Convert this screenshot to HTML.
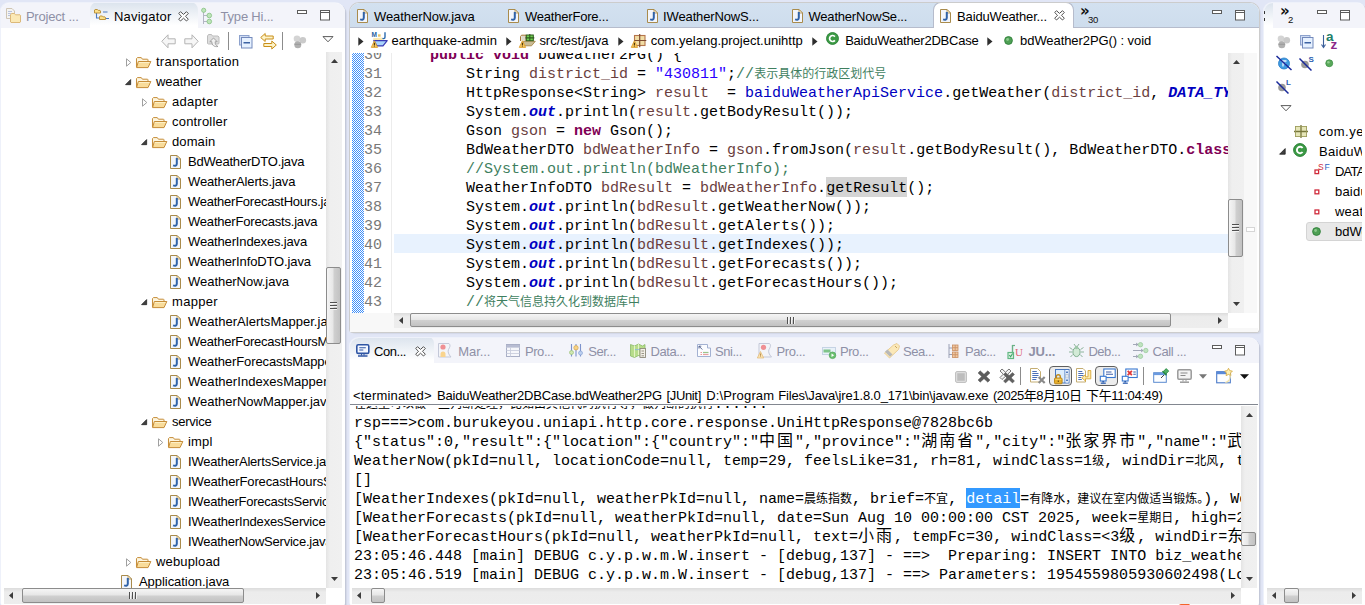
<!DOCTYPE html>
<html lang="zh-CN"><head><meta charset="utf-8"><title>Eclipse</title>
<style>
*{box-sizing:border-box;margin:0;padding:0}
html,body{width:1365px;height:605px;overflow:hidden}
body{background:#e1e6f6;font-family:"Liberation Sans","Noto Sans CJK SC",sans-serif;font-size:13px;color:#000;position:relative}
.abs{position:absolute}
.panel{position:absolute;background:#fff;border-radius:9px 9px 3px 3px;overflow:hidden;box-shadow:-1px -1px 0 #eef1fa,1px 1px 0 #c3c8d8,2px 2px 1px #d3d8e8}
.tabbar{position:absolute;left:0;top:0;right:0;height:25px;background:#f3f4fa}
.tabbar.act{background:linear-gradient(#d3e1f0,#cedded);height:25px;border-bottom:1px solid #b6bccc}
.panel.actp{box-shadow:0 0 0 1px #cccccc,2px 2px 1px #d3d8e8}
.tab.sel.ed{background:#fff;border:1px solid #b6bccc;border-bottom:0;height:27px;top:-1px}
.tab{position:absolute;top:0;height:25px;white-space:pre;line-height:27px;color:#8d8fa9}
.tab.sel{color:#000;background:linear-gradient(#dbe3ed,#fff 90%);border-radius:8px 8px 0 0;top:-1px;height:26px}
.t13{font-size:13px}
svg{display:block;overflow:visible}
.row{position:absolute;left:0;height:20px;width:400px;white-space:pre}
.row .tx{top:0;line-height:19px;font-size:13px}
.cl{position:absolute;left:0;height:19px;width:1000px;white-space:pre;font-family:"Liberation Mono","Noto Sans CJK SC",monospace;font-size:15px;line-height:19px}
.cl.cur .ct::before{content:"";position:absolute;left:0;top:-2px;width:100%;height:19px;background:#e8f2fe;z-index:-1}
.cl.cur .ct{z-index:0}
.ln{position:absolute;left:14px;width:18px;color:#787878;text-align:right}
.ct{position:absolute;left:44px;width:834px;height:19px}
.kw{color:#7f0055}
.lv{color:#6a3e3e}
.st{color:#2a00ff}
.cm{color:#3f7f5f}
.fd{color:#0000c0}
.sf{color:#0000c0;font-style:italic}
.occ{background:#d4d4d4;padding-top:3px}
.zh{font-size:12px;font-family:"Liberation Sans","Noto Sans CJK SC",sans-serif;letter-spacing:0;line-height:0}
.col{position:absolute;left:4px;height:19px;white-space:pre;font-family:"Liberation Mono","Noto Sans CJK SC",monospace;font-size:15px;line-height:19px;color:#000}
.zs{font-size:12px;font-family:"Liberation Sans","Noto Sans CJK SC",sans-serif;line-height:0}
.zb{font-size:16px;letter-spacing:2px;font-family:"Liberation Sans","Noto Sans CJK SC",sans-serif;line-height:0}
.sel{background:#3399ff;color:#fff;padding-top:3px}
.chk{background-color:#fff;background-image:linear-gradient(45deg,#3f8ffa 25%,transparent 25%,transparent 75%,#3f8ffa 75%),linear-gradient(45deg,#3f8ffa 25%,transparent 25%,transparent 75%,#3f8ffa 75%);background-size:2px 2px;background-position:0 0,1px 1px}
.i{position:absolute}
.lb{position:absolute;white-space:pre;font-size:13px;line-height:16px;color:#000}
.lb.g{color:#8e90a6}
.sb{position:absolute;background:#f0f0f0}
.sbv{background:linear-gradient(90deg,#e4e4e4,#efefef 25%,#f0f0f0)}
.sbh{background:linear-gradient(#dcdcdc,#ececec 25%,#ededed)}
.th{position:absolute;border:1px solid #8c8c8c;border-radius:2px}
.thv{background:linear-gradient(90deg,#f5f5f5,#e6e6e6 48%,#d0d0d0 52%,#c2c2c2)}
.thh{background:linear-gradient(#f5f5f5,#e6e6e6 48%,#d0d0d0 52%,#c2c2c2)}
.gpv{position:absolute;width:7px;height:8px;background:repeating-linear-gradient(#505050 0,#505050 1px,#f4f4f4 1px,#f4f4f4 2px,transparent 2px,transparent 3px)}
.gph{position:absolute;width:8px;height:7px;background:repeating-linear-gradient(90deg,#505050 0,#505050 1px,#f4f4f4 1px,#f4f4f4 2px,transparent 2px,transparent 3px)}
.bc{position:absolute;top:0;line-height:24px;white-space:pre;font-size:13px}
</style></head><body>

<!-- ============ LEFT PANEL : Navigator ============ -->
<div class="panel" style="left:1px;top:3px;width:344px;height:603px">
  <div class="tabbar"></div>
  <div class="tab sel" style="left:89px;width:108px"></div>
  <div class="abs" id="navtree" style="left:1px;top:49px;width:324px;height:536px;overflow:hidden">
<div class="row" style="top:0px"><span style="left:124px;top:6px" class="abs"><svg class="tw" width="6" height="9" viewBox="0 0 6 9"><path d="M0.5 0.8L4.8 4.5L0.5 8.2z" fill="#fff" stroke="#a0a0a0" stroke-width="1"/></svg></span><span class="abs" style="left:134px;top:5px"><svg class="ic" width="15.4" height="12" viewBox="0 0 16 12" preserveAspectRatio="none"><path d="M0.5 10V1.6l1-1h4l1.2 1.6h5.3l.5.6v2.2" fill="#fdf6e0" stroke="#c48a35"/><path d="M0.6 10.6L2.4 4.5h13l-2.9 6.1z" fill="#f9dc9a" stroke="#c48a35" stroke-linejoin="round"/><path d="M3 5.5h11" stroke="#fdf0c8" stroke-width="1"/></svg></span><span class="abs tx" style="left:154px;letter-spacing:0.26px">transportation</span></div>
<div class="row" style="top:20px"><span style="left:123px;top:7px" class="abs"><svg class="tw" width="6.4" height="6.4" viewBox="0 0 7 7"><path d="M6.2 0.6v5.6h-5.6z" fill="#404040" stroke="#202020" stroke-width=".8" stroke-linejoin="round"/></svg></span><span class="abs" style="left:134px;top:5px"><svg class="ic" width="15.4" height="12" viewBox="0 0 16 12" preserveAspectRatio="none"><path d="M0.5 10V1.6l1-1h4l1.2 1.6h5.3l.5.6v2.2" fill="#fdf6e0" stroke="#c48a35"/><path d="M0.6 10.6L2.4 4.5h13l-2.9 6.1z" fill="#f9dc9a" stroke="#c48a35" stroke-linejoin="round"/><path d="M3 5.5h11" stroke="#fdf0c8" stroke-width="1"/></svg></span><span class="abs tx" style="left:154px;letter-spacing:-0.04px">weather</span></div>
<div class="row" style="top:40px"><span style="left:140px;top:6px" class="abs"><svg class="tw" width="6" height="9" viewBox="0 0 6 9"><path d="M0.5 0.8L4.8 4.5L0.5 8.2z" fill="#fff" stroke="#a0a0a0" stroke-width="1"/></svg></span><span class="abs" style="left:150px;top:5px"><svg class="ic" width="15.4" height="12" viewBox="0 0 16 12" preserveAspectRatio="none"><path d="M0.5 10V1.6l1-1h4l1.2 1.6h5.3l.5.6v2.2" fill="#fdf6e0" stroke="#c48a35"/><path d="M0.6 10.6L2.4 4.5h13l-2.9 6.1z" fill="#f9dc9a" stroke="#c48a35" stroke-linejoin="round"/><path d="M3 5.5h11" stroke="#fdf0c8" stroke-width="1"/></svg></span><span class="abs tx" style="left:170px;letter-spacing:0.27px">adapter</span></div>
<div class="row" style="top:60px"><span class="abs" style="left:150px;top:5px"><svg class="ic" width="15.4" height="12" viewBox="0 0 16 12" preserveAspectRatio="none"><path d="M0.5 10V1.6l1-1h4l1.2 1.6h5.3l.5.6v2.2" fill="#fdf6e0" stroke="#c48a35"/><path d="M0.6 10.6L2.4 4.5h13l-2.9 6.1z" fill="#f9dc9a" stroke="#c48a35" stroke-linejoin="round"/><path d="M3 5.5h11" stroke="#fdf0c8" stroke-width="1"/></svg></span><span class="abs tx" style="left:170px;letter-spacing:0.2px">controller</span></div>
<div class="row" style="top:80px"><span style="left:139px;top:7px" class="abs"><svg class="tw" width="6.4" height="6.4" viewBox="0 0 7 7"><path d="M6.2 0.6v5.6h-5.6z" fill="#404040" stroke="#202020" stroke-width=".8" stroke-linejoin="round"/></svg></span><span class="abs" style="left:150px;top:5px"><svg class="ic" width="15.4" height="12" viewBox="0 0 16 12" preserveAspectRatio="none"><path d="M0.5 10V1.6l1-1h4l1.2 1.6h5.3l.5.6v2.2" fill="#fdf6e0" stroke="#c48a35"/><path d="M0.6 10.6L2.4 4.5h13l-2.9 6.1z" fill="#f9dc9a" stroke="#c48a35" stroke-linejoin="round"/><path d="M3 5.5h11" stroke="#fdf0c8" stroke-width="1"/></svg></span><span class="abs tx" style="left:170px;letter-spacing:0.11px">domain</span></div>
<div class="row" style="top:100px"><span class="abs" style="left:168px;top:3px"><svg class="ic" width="11" height="14" viewBox="0 0 11 14"><path d="M0.500 0.500h6.500l3.500 3.500v9.500h-10z" fill="#f3f6fc" stroke="#a98b4c"/><path d="M7 0.500v3.500h3.500z" fill="#fdf6e0" stroke="#a98b4c" stroke-width=".8"/><path d="M6.800 3v5.800c0 1.900-1.500 2.500-3.700 1.600" fill="none" stroke="#2f62a8" stroke-width="2"/></svg></span><span class="abs tx" style="left:186px;letter-spacing:-0.19px">BdWeatherDTO.java</span></div>
<div class="row" style="top:120px"><span class="abs" style="left:168px;top:3px"><svg class="ic" width="11" height="14" viewBox="0 0 11 14"><path d="M0.500 0.500h6.500l3.500 3.500v9.500h-10z" fill="#f3f6fc" stroke="#a98b4c"/><path d="M7 0.500v3.500h3.500z" fill="#fdf6e0" stroke="#a98b4c" stroke-width=".8"/><path d="M6.800 3v5.800c0 1.900-1.500 2.500-3.700 1.600" fill="none" stroke="#2f62a8" stroke-width="2"/></svg></span><span class="abs tx" style="left:186px;letter-spacing:-0.13px">WeatherAlerts.java</span></div>
<div class="row" style="top:140px"><span class="abs" style="left:168px;top:3px"><svg class="ic" width="11" height="14" viewBox="0 0 11 14"><path d="M0.500 0.500h6.500l3.500 3.500v9.500h-10z" fill="#f3f6fc" stroke="#a98b4c"/><path d="M7 0.500v3.500h3.500z" fill="#fdf6e0" stroke="#a98b4c" stroke-width=".8"/><path d="M6.800 3v5.800c0 1.900-1.500 2.500-3.700 1.600" fill="none" stroke="#2f62a8" stroke-width="2"/></svg></span><span class="abs tx" style="left:186px;letter-spacing:-0.25px">WeatherForecastHours.java</span></div>
<div class="row" style="top:160px"><span class="abs" style="left:168px;top:3px"><svg class="ic" width="11" height="14" viewBox="0 0 11 14"><path d="M0.500 0.500h6.500l3.500 3.500v9.500h-10z" fill="#f3f6fc" stroke="#a98b4c"/><path d="M7 0.500v3.500h3.500z" fill="#fdf6e0" stroke="#a98b4c" stroke-width=".8"/><path d="M6.800 3v5.800c0 1.900-1.500 2.500-3.700 1.600" fill="none" stroke="#2f62a8" stroke-width="2"/></svg></span><span class="abs tx" style="left:186px;letter-spacing:-0.2px">WeatherForecasts.java</span></div>
<div class="row" style="top:180px"><span class="abs" style="left:168px;top:3px"><svg class="ic" width="11" height="14" viewBox="0 0 11 14"><path d="M0.500 0.500h6.500l3.500 3.500v9.500h-10z" fill="#f3f6fc" stroke="#a98b4c"/><path d="M7 0.500v3.500h3.500z" fill="#fdf6e0" stroke="#a98b4c" stroke-width=".8"/><path d="M6.800 3v5.800c0 1.900-1.500 2.500-3.700 1.600" fill="none" stroke="#2f62a8" stroke-width="2"/></svg></span><span class="abs tx" style="left:186px;letter-spacing:-0.15px">WeatherIndexes.java</span></div>
<div class="row" style="top:200px"><span class="abs" style="left:168px;top:3px"><svg class="ic" width="11" height="14" viewBox="0 0 11 14"><path d="M0.500 0.500h6.500l3.500 3.500v9.500h-10z" fill="#f3f6fc" stroke="#a98b4c"/><path d="M7 0.500v3.500h3.500z" fill="#fdf6e0" stroke="#a98b4c" stroke-width=".8"/><path d="M6.800 3v5.800c0 1.900-1.500 2.500-3.700 1.600" fill="none" stroke="#2f62a8" stroke-width="2"/></svg></span><span class="abs tx" style="left:186px;letter-spacing:-0.12px">WeatherInfoDTO.java</span></div>
<div class="row" style="top:220px"><span class="abs" style="left:168px;top:3px"><svg class="ic" width="11" height="14" viewBox="0 0 11 14"><path d="M0.500 0.500h6.500l3.500 3.500v9.500h-10z" fill="#f3f6fc" stroke="#a98b4c"/><path d="M7 0.500v3.500h3.500z" fill="#fdf6e0" stroke="#a98b4c" stroke-width=".8"/><path d="M6.800 3v5.800c0 1.900-1.500 2.500-3.700 1.600" fill="none" stroke="#2f62a8" stroke-width="2"/></svg></span><span class="abs tx" style="left:186px;letter-spacing:-0.04px">WeatherNow.java</span></div>
<div class="row" style="top:240px"><span style="left:139px;top:7px" class="abs"><svg class="tw" width="6.4" height="6.4" viewBox="0 0 7 7"><path d="M6.2 0.6v5.6h-5.6z" fill="#404040" stroke="#202020" stroke-width=".8" stroke-linejoin="round"/></svg></span><span class="abs" style="left:150px;top:5px"><svg class="ic" width="15.4" height="12" viewBox="0 0 16 12" preserveAspectRatio="none"><path d="M0.5 10V1.6l1-1h4l1.2 1.6h5.3l.5.6v2.2" fill="#fdf6e0" stroke="#c48a35"/><path d="M0.6 10.6L2.4 4.5h13l-2.9 6.1z" fill="#f9dc9a" stroke="#c48a35" stroke-linejoin="round"/><path d="M3 5.5h11" stroke="#fdf0c8" stroke-width="1"/></svg></span><span class="abs tx" style="left:170px;letter-spacing:0.32px">mapper</span></div>
<div class="row" style="top:260px"><span class="abs" style="left:168px;top:3px"><svg class="ic" width="11" height="14" viewBox="0 0 11 14"><path d="M0.500 0.500h6.500l3.500 3.500v9.500h-10z" fill="#f3f6fc" stroke="#a98b4c"/><path d="M7 0.500v3.500h3.500z" fill="#fdf6e0" stroke="#a98b4c" stroke-width=".8"/><path d="M6.800 3v5.800c0 1.900-1.500 2.500-3.700 1.600" fill="none" stroke="#2f62a8" stroke-width="2"/></svg></span><span class="abs tx" style="left:186px;letter-spacing:0.02px">WeatherAlertsMapper.java</span></div>
<div class="row" style="top:280px"><span class="abs" style="left:168px;top:3px"><svg class="ic" width="11" height="14" viewBox="0 0 11 14"><path d="M0.500 0.500h6.500l3.500 3.500v9.500h-10z" fill="#f3f6fc" stroke="#a98b4c"/><path d="M7 0.500v3.500h3.500z" fill="#fdf6e0" stroke="#a98b4c" stroke-width=".8"/><path d="M6.800 3v5.800c0 1.900-1.500 2.500-3.700 1.600" fill="none" stroke="#2f62a8" stroke-width="2"/></svg></span><span class="abs tx" style="left:186px;letter-spacing:-0.23px">WeatherForecastHoursMapper.java</span></div>
<div class="row" style="top:300px"><span class="abs" style="left:168px;top:3px"><svg class="ic" width="11" height="14" viewBox="0 0 11 14"><path d="M0.500 0.500h6.500l3.500 3.500v9.500h-10z" fill="#f3f6fc" stroke="#a98b4c"/><path d="M7 0.500v3.500h3.500z" fill="#fdf6e0" stroke="#a98b4c" stroke-width=".8"/><path d="M6.800 3v5.800c0 1.900-1.500 2.500-3.700 1.600" fill="none" stroke="#2f62a8" stroke-width="2"/></svg></span><span class="abs tx" style="left:186px;letter-spacing:-0.1px">WeatherForecastsMapper.java</span></div>
<div class="row" style="top:320px"><span class="abs" style="left:168px;top:3px"><svg class="ic" width="11" height="14" viewBox="0 0 11 14"><path d="M0.500 0.500h6.500l3.500 3.500v9.500h-10z" fill="#f3f6fc" stroke="#a98b4c"/><path d="M7 0.500v3.500h3.500z" fill="#fdf6e0" stroke="#a98b4c" stroke-width=".8"/><path d="M6.800 3v5.800c0 1.900-1.500 2.500-3.700 1.600" fill="none" stroke="#2f62a8" stroke-width="2"/></svg></span><span class="abs tx" style="left:186px;letter-spacing:0.05px">WeatherIndexesMapper.java</span></div>
<div class="row" style="top:340px"><span class="abs" style="left:168px;top:3px"><svg class="ic" width="11" height="14" viewBox="0 0 11 14"><path d="M0.500 0.500h6.500l3.500 3.500v9.500h-10z" fill="#f3f6fc" stroke="#a98b4c"/><path d="M7 0.500v3.500h3.500z" fill="#fdf6e0" stroke="#a98b4c" stroke-width=".8"/><path d="M6.800 3v5.800c0 1.900-1.500 2.500-3.700 1.600" fill="none" stroke="#2f62a8" stroke-width="2"/></svg></span><span class="abs tx" style="left:186px;letter-spacing:0.0px">WeatherNowMapper.java</span></div>
<div class="row" style="top:360px"><span style="left:139px;top:7px" class="abs"><svg class="tw" width="6.4" height="6.4" viewBox="0 0 7 7"><path d="M6.2 0.6v5.6h-5.6z" fill="#404040" stroke="#202020" stroke-width=".8" stroke-linejoin="round"/></svg></span><span class="abs" style="left:150px;top:5px"><svg class="ic" width="15.4" height="12" viewBox="0 0 16 12" preserveAspectRatio="none"><path d="M0.5 10V1.6l1-1h4l1.2 1.6h5.3l.5.6v2.2" fill="#fdf6e0" stroke="#c48a35"/><path d="M0.6 10.6L2.4 4.5h13l-2.9 6.1z" fill="#f9dc9a" stroke="#c48a35" stroke-linejoin="round"/><path d="M3 5.5h11" stroke="#fdf0c8" stroke-width="1"/></svg></span><span class="abs tx" style="left:170px;letter-spacing:-0.24px">service</span></div>
<div class="row" style="top:380px"><span style="left:156px;top:6px" class="abs"><svg class="tw" width="6" height="9" viewBox="0 0 6 9"><path d="M0.5 0.8L4.8 4.5L0.5 8.2z" fill="#fff" stroke="#a0a0a0" stroke-width="1"/></svg></span><span class="abs" style="left:166px;top:5px"><svg class="ic" width="15.4" height="12" viewBox="0 0 16 12" preserveAspectRatio="none"><path d="M0.5 10V1.6l1-1h4l1.2 1.6h5.3l.5.6v2.2" fill="#fdf6e0" stroke="#c48a35"/><path d="M0.6 10.6L2.4 4.5h13l-2.9 6.1z" fill="#f9dc9a" stroke="#c48a35" stroke-linejoin="round"/><path d="M3 5.5h11" stroke="#fdf0c8" stroke-width="1"/></svg></span><span class="abs tx" style="left:186px;letter-spacing:0.19px">impl</span></div>
<div class="row" style="top:400px"><span class="abs" style="left:168px;top:3px"><svg class="ic" width="11" height="14" viewBox="0 0 11 14"><path d="M0.500 0.500h6.500l3.500 3.500v9.500h-10z" fill="#f3f6fc" stroke="#a98b4c"/><path d="M7 0.500v3.500h3.500z" fill="#fdf6e0" stroke="#a98b4c" stroke-width=".8"/><path d="M6.800 3v5.800c0 1.900-1.500 2.500-3.700 1.600" fill="none" stroke="#2f62a8" stroke-width="2"/></svg></span><span class="abs tx" style="left:186px;letter-spacing:-0.2px">IWeatherAlertsService.java</span></div>
<div class="row" style="top:420px"><span class="abs" style="left:168px;top:3px"><svg class="ic" width="11" height="14" viewBox="0 0 11 14"><path d="M0.500 0.500h6.500l3.500 3.500v9.500h-10z" fill="#f3f6fc" stroke="#a98b4c"/><path d="M7 0.500v3.500h3.500z" fill="#fdf6e0" stroke="#a98b4c" stroke-width=".8"/><path d="M6.800 3v5.800c0 1.900-1.500 2.500-3.700 1.600" fill="none" stroke="#2f62a8" stroke-width="2"/></svg></span><span class="abs tx" style="left:186px;letter-spacing:-0.13px">IWeatherForecastHoursService.java</span></div>
<div class="row" style="top:440px"><span class="abs" style="left:168px;top:3px"><svg class="ic" width="11" height="14" viewBox="0 0 11 14"><path d="M0.500 0.500h6.500l3.500 3.500v9.500h-10z" fill="#f3f6fc" stroke="#a98b4c"/><path d="M7 0.500v3.500h3.500z" fill="#fdf6e0" stroke="#a98b4c" stroke-width=".8"/><path d="M6.800 3v5.800c0 1.900-1.500 2.500-3.700 1.600" fill="none" stroke="#2f62a8" stroke-width="2"/></svg></span><span class="abs tx" style="left:186px;letter-spacing:-0.24px">IWeatherForecastsService.java</span></div>
<div class="row" style="top:460px"><span class="abs" style="left:168px;top:3px"><svg class="ic" width="11" height="14" viewBox="0 0 11 14"><path d="M0.500 0.500h6.500l3.500 3.500v9.500h-10z" fill="#f3f6fc" stroke="#a98b4c"/><path d="M7 0.500v3.500h3.500z" fill="#fdf6e0" stroke="#a98b4c" stroke-width=".8"/><path d="M6.800 3v5.800c0 1.900-1.500 2.500-3.700 1.600" fill="none" stroke="#2f62a8" stroke-width="2"/></svg></span><span class="abs tx" style="left:186px;letter-spacing:-0.18px">IWeatherIndexesService.java</span></div>
<div class="row" style="top:480px"><span class="abs" style="left:168px;top:3px"><svg class="ic" width="11" height="14" viewBox="0 0 11 14"><path d="M0.500 0.500h6.500l3.500 3.500v9.500h-10z" fill="#f3f6fc" stroke="#a98b4c"/><path d="M7 0.500v3.500h3.500z" fill="#fdf6e0" stroke="#a98b4c" stroke-width=".8"/><path d="M6.800 3v5.800c0 1.900-1.500 2.500-3.700 1.600" fill="none" stroke="#2f62a8" stroke-width="2"/></svg></span><span class="abs tx" style="left:186px;letter-spacing:-0.22px">IWeatherNowService.java</span></div>
<div class="row" style="top:500px"><span style="left:124px;top:6px" class="abs"><svg class="tw" width="6" height="9" viewBox="0 0 6 9"><path d="M0.5 0.8L4.8 4.5L0.5 8.2z" fill="#fff" stroke="#a0a0a0" stroke-width="1"/></svg></span><span class="abs" style="left:134px;top:5px"><svg class="ic" width="15.4" height="12" viewBox="0 0 16 12" preserveAspectRatio="none"><path d="M0.5 10V1.6l1-1h4l1.2 1.6h5.3l.5.6v2.2" fill="#fdf6e0" stroke="#c48a35"/><path d="M0.6 10.6L2.4 4.5h13l-2.9 6.1z" fill="#f9dc9a" stroke="#c48a35" stroke-linejoin="round"/><path d="M3 5.5h11" stroke="#fdf0c8" stroke-width="1"/></svg></span><span class="abs tx" style="left:154px;letter-spacing:0.15px">webupload</span></div>
<div class="row" style="top:520px"><span class="abs" style="left:119px;top:3px"><svg class="ic" width="11" height="14" viewBox="0 0 11 14"><path d="M0.500 0.500h6.500l3.500 3.500v9.500h-10z" fill="#f3f6fc" stroke="#a98b4c"/><path d="M7 0.500v3.500h3.500z" fill="#fdf6e0" stroke="#a98b4c" stroke-width=".8"/><path d="M6.800 3v5.800c0 1.900-1.500 2.500-3.700 1.600" fill="none" stroke="#2f62a8" stroke-width="2"/></svg></span><span class="abs tx" style="left:137px;letter-spacing:-0.05px">Application.java</span></div>
  </div>
</div>

<!-- ============ EDITOR PANEL ============ -->
<div class="panel actp" style="left:350px;top:3px;width:909px;height:329px">
  <div class="tabbar act"></div>
  <div class="tab sel ed" style="left:583px;width:141px"></div>
  <div class="abs" style="left:0;top:25px;width:908px;height:25px;background:#fff">
  </div>
  <div class="abs" id="code" style="left:0;top:50px;width:878px;height:260px;overflow:hidden">
    <div class="abs chk" style="left:2px;top:0;width:12px;height:261px"></div>
    <div class="abs" style="left:41px;top:0;width:1px;height:261px;background:#ececec"></div>
<div class="cl" style="top:-7px"><span class="ln">30</span><span class="ct">    <b class="kw">public</b> <b class="kw">void</b> bdWeather2PG() {</span></div>
<div class="cl" style="top:12px"><span class="ln">31</span><span class="ct">        String <span class="lv">district_id</span> = <span class="st">"430811"</span>;<span class="cm">//<span class="zh">表示具体的行政区划代号</span></span></span></div>
<div class="cl" style="top:31px"><span class="ln">32</span><span class="ct">        HttpResponse&lt;String&gt; <span class="lv">result</span>  = <span class="fd">baiduWeatherApiService</span>.getWeather(<span class="lv">district_id</span>, <b class="sf">DATA_TYPE</b>);</span></div>
<div class="cl" style="top:50px"><span class="ln">33</span><span class="ct">        System.<b class="sf">out</b>.println(<span class="lv">result</span>.getBodyResult());</span></div>
<div class="cl" style="top:69px"><span class="ln">34</span><span class="ct">        Gson <span class="lv">gson</span> = <b class="kw">new</b> Gson();</span></div>
<div class="cl" style="top:88px"><span class="ln">35</span><span class="ct">        BdWeatherDTO <span class="lv">bdWeatherInfo</span> = <span class="lv">gson</span>.fromJson(<span class="lv">result</span>.getBodyResult(), BdWeatherDTO.<b class="kw">class</b>);</span></div>
<div class="cl" style="top:107px"><span class="ln">36</span><span class="ct">        <span class="cm">//System.out.println(bdWeatherInfo);</span></span></div>
<div class="cl" style="top:126px"><span class="ln">37</span><span class="ct">        WeatherInfoDTO <span class="lv">bdResult</span> = <span class="lv">bdWeatherInfo</span>.<span class="occ">getResult</span>();</span></div>
<div class="cl" style="top:145px"><span class="ln">38</span><span class="ct">        System.<b class="sf">out</b>.println(<span class="lv">bdResult</span>.getWeatherNow());</span></div>
<div class="cl" style="top:164px"><span class="ln">39</span><span class="ct">        System.<b class="sf">out</b>.println(<span class="lv">bdResult</span>.getAlerts());</span></div>
<div class="cl cur" style="top:183px"><span class="ln">40</span><span class="ct">        System.<b class="sf">out</b>.println(<span class="lv">bdResult</span>.getIndexes());</span></div>
<div class="cl" style="top:202px"><span class="ln">41</span><span class="ct">        System.<b class="sf">out</b>.println(<span class="lv">bdResult</span>.getForecasts());</span></div>
<div class="cl" style="top:221px"><span class="ln">42</span><span class="ct">        System.<b class="sf">out</b>.println(<span class="lv">bdResult</span>.getForecastHours());</span></div>
<div class="cl" style="top:240px"><span class="ln">43</span><span class="ct">        <span class="cm">//<span class="zh">将天气信息持久化到数据库中</span></span></span></div>

  </div>
</div>

<!-- ============ CONSOLE PANEL ============ -->
<div class="panel" style="left:350px;top:338px;width:909px;height:268px">
  <div class="tabbar"></div>
  <div class="tab sel" style="left:0;width:84px;border-radius:6px 6px 0 0"></div>
  <div class="abs" style="left:0;top:66px;width:908px;height:1px;background:#828790"></div>
  <div class="abs" id="con" style="left:0;top:68px;width:891px;height:182px;overflow:hidden">
<div class="col" style="top:-11px"><span class="zs">在这里可以做一些判断处理，比如由其他代码执行等，做判断的执行</span>......</div>
<div class="col" style="top:8px">rsp===&gt;com.burukeyou.uniapi.http.core.response.UniHttpResponse@7828bc6b</div>
<div class="col" style="top:27px">{"status":0,"result":{"location":{"country":"<span class="zb">中国</span>","province":"<span class="zb">湖南省</span>","city":"<span class="zb">张家界市</span>","name":"<span class="zb">武陵源</span>"</div>
<div class="col" style="top:46px">WeatherNow(pkId=null, locationCode=null, temp=29, feelsLike=31, rh=81, windClass=1<span class="zs">级</span>, windDir=<span class="zs">北风</span>, text=</div>
<div class="col" style="top:65px">[]</div>
<div class="col" style="top:84px">[WeatherIndexes(pkId=null, weatherPkId=null, name=<span class="zs">晨练指数</span>, brief=<span class="zs">不宜</span>, <span class="sel">detail</span>=<span class="zs">有降水，建议在室内做适当锻炼。</span>), WeatherIndexes(</div>
<div class="col" style="top:103px">[WeatherForecasts(pkId=null, weatherPkId=null, date=Sun Aug 10 00:00:00 CST 2025, week=<span class="zs">星期日</span>, high=29, low=</div>
<div class="col" style="top:122px">[WeatherForecastHours(pkId=null, weatherPkId=null, text=<span class="zb">小雨</span>, tempFc=30, windClass=&lt;3<span class="zb">级</span>, windDir=<span class="zb">东风</span>, rh=</div>
<div class="col" style="top:141px">23:05:46.448 [main] DEBUG c.y.p.w.m.W.insert - [debug,137] - ==&gt;  Preparing: INSERT INTO biz_weather_now</div>
<div class="col" style="top:160px">23:05:46.519 [main] DEBUG c.y.p.w.m.W.insert - [debug,137] - ==&gt; Parameters: 1954559805930602498(Long)</div>

  </div>
</div>

<!-- ============ OUTLINE PANEL ============ -->
<div class="panel" style="left:1264px;top:3px;width:101px;height:603px;border-radius:9px 7px 3px 3px">
  <div class="tabbar" style="left:9px"></div>
  <div class="abs" style="left:0;top:0;width:9px;height:25px;background:linear-gradient(#dbe3ed,#fff 90%)"></div>
  <div class="abs" style="left:0;top:8px;width:1px;height:3px;background:#333"></div><div class="abs" style="left:0;top:15px;width:1px;height:3px;background:#333"></div>
  <div class="abs t13" style="left:55px;top:119px;line-height:19px;white-space:pre;letter-spacing:.5px">com.yelang.project.unihttp</div>
  <div class="abs t13" style="left:55px;top:139px;line-height:19px;white-space:pre;letter-spacing:.3px">BaiduWeather2DBCase</div>
  <div class="abs t13" style="left:71px;top:159px;line-height:19px;white-space:pre;letter-spacing:-.8px">DATA_TYPE</div>
  <div class="abs t13" style="left:71px;top:179px;line-height:19px;white-space:pre;letter-spacing:.2px">baiduWeatherApiService</div>
  <div class="abs t13" style="left:71px;top:199px;line-height:19px;white-space:pre;letter-spacing:.2px">weatherService</div>
  <div class="abs" style="left:42px;top:219px;width:90px;height:19px;background:#e8e8e8;border:1px solid #d4d4d4;border-radius:3px"></div>
  <div class="abs t13" style="left:71px;top:219px;line-height:19px;white-space:pre">bdWeather2PG() : void</div>
</div>

<!-- ============ ICON OVERLAY (page coordinates) ============ -->
<div class="i" style="left:1178px;top:603px;width:12px;height:6px;border-radius:50% 60% 0 0;background:#f4642a;transform:rotate(-12deg)"></div>
<div class="i" style="left:1362px;top:28px;width:3px;height:578px;background:#fff"></div>
<div id="scroll">
<div class="sb sbv" style="left:326px;top:52px;width:16px;height:536px"></div><svg class="i" style="left:331.0px;top:59.0px" width="7" height="4" viewBox="0 0 7 4"><polygon points="0,4 3.5,0 7,4" fill="#3c3c3c"/></svg><svg class="i" style="left:331.0px;top:577.0px" width="7" height="4" viewBox="0 0 7 4"><polygon points="0,0 7,0 3.5,4" fill="#3c3c3c"/></svg><div class="th thv" style="left:326px;top:267px;width:15px;height:77px"></div><div class="gpv" style="left:330px;top:302px"></div>
<div class="sb sbh" style="left:4px;top:588px;width:322px;height:16px"></div><svg class="i" style="left:9.0px;top:592.0px" width="4" height="7" viewBox="0 0 4 7"><polygon points="4,0 4,7 0,3.5" fill="#3c3c3c"/></svg><svg class="i" style="left:316.0px;top:592.0px" width="4" height="7" viewBox="0 0 4 7"><polygon points="0,0 0,7 4,3.5" fill="#3c3c3c"/></svg><div class="th thh" style="left:22px;top:588px;width:222px;height:15px"></div><div class="gph" style="left:129px;top:592px"></div>
<div class="sb" style="left:1244px;top:53px;width:13px;height:260px;background:#f8f8f8"></div><div class="i" style="left:1246px;top:227px;width:9px;height:5px;border:1px solid #d6d6d6;background:#fff"></div><div class="sb sbv" style="left:1228px;top:53px;width:16px;height:260px"></div><svg class="i" style="left:1233.0px;top:60.0px" width="7" height="4" viewBox="0 0 7 4"><polygon points="0,4 3.5,0 7,4" fill="#3c3c3c"/></svg><svg class="i" style="left:1233.0px;top:302.0px" width="7" height="4" viewBox="0 0 7 4"><polygon points="0,0 7,0 3.5,4" fill="#3c3c3c"/></svg><div class="th thv" style="left:1228px;top:199px;width:15px;height:58px"></div><div class="gpv" style="left:1232px;top:224px"></div>
<div class="sb sbh" style="left:394px;top:313px;width:834px;height:15px"></div><svg class="i" style="left:399.0px;top:316.5px" width="4" height="7" viewBox="0 0 4 7"><polygon points="4,0 4,7 0,3.5" fill="#3c3c3c"/></svg><svg class="i" style="left:1218.0px;top:316.5px" width="4" height="7" viewBox="0 0 4 7"><polygon points="0,0 0,7 4,3.5" fill="#3c3c3c"/></svg><div class="th thh" style="left:410px;top:313px;width:761px;height:14px"></div><div class="gph" style="left:787px;top:317px"></div>
<div class="sb" style="left:350px;top:313px;width:44px;height:19px;background:#f8f8f8"></div><div class="sb" style="left:394px;top:328px;width:864px;height:4px;background:#f8f8f8"></div><div class="sb sbv" style="left:1241px;top:406px;width:16px;height:182px"></div><svg class="i" style="left:1246.0px;top:413.0px" width="7" height="4" viewBox="0 0 7 4"><polygon points="0,4 3.5,0 7,4" fill="#3c3c3c"/></svg><svg class="i" style="left:1246.0px;top:577.0px" width="7" height="4" viewBox="0 0 7 4"><polygon points="0,0 7,0 3.5,4" fill="#3c3c3c"/></svg><div class="th thv" style="left:1241px;top:532px;width:15px;height:14px"></div>
<div class="sb sbh" style="left:352px;top:588px;width:889px;height:16px"></div><svg class="i" style="left:357.0px;top:592.0px" width="4" height="7" viewBox="0 0 4 7"><polygon points="4,0 4,7 0,3.5" fill="#3c3c3c"/></svg><svg class="i" style="left:1231.0px;top:592.0px" width="4" height="7" viewBox="0 0 4 7"><polygon points="0,0 0,7 4,3.5" fill="#3c3c3c"/></svg><div class="th thh" style="left:371px;top:588px;width:14px;height:15px"></div>
<div class="sb sbh" style="left:1267px;top:588px;width:95px;height:16px"></div><svg class="i" style="left:1272.0px;top:592.0px" width="4" height="7" viewBox="0 0 4 7"><polygon points="4,0 4,7 0,3.5" fill="#3c3c3c"/></svg><svg class="i" style="left:1352.0px;top:592.0px" width="4" height="7" viewBox="0 0 4 7"><polygon points="0,0 0,7 4,3.5" fill="#3c3c3c"/></svg><div class="th thh" style="left:1284px;top:588px;width:15px;height:15px"></div>

</div>
<div id="labels">
<div class="lb g" style="left:25.9px;top:9px;letter-spacing:-0.19px">Project ...</div>
<div class="lb" style="left:114.0px;top:9px;letter-spacing:0.21px">Navigator</div>
<div class="lb g" style="left:220.5px;top:9px;letter-spacing:-0.19px">Type Hi...</div>
<div class="lb" style="left:373.9px;top:9px;letter-spacing:-0.05px">WeatherNow.java</div>
<div class="lb" style="left:524.9px;top:9px;letter-spacing:-0.20px">WeatherFore...</div>
<div class="lb" style="left:663.1px;top:9px;letter-spacing:-0.14px">IWeatherNowS...</div>
<div class="lb" style="left:808.5px;top:9px;letter-spacing:-0.20px">WeatherNowSe...</div>
<div class="lb" style="left:957.1px;top:9px;letter-spacing:-0.16px">BaiduWeather...</div>
<div class="lb" style="left:391.5px;top:33px;letter-spacing:0.04px">earthquake-admin</div>
<div class="lb" style="left:539.4px;top:33px;letter-spacing:-0.02px">src/test/java</div>
<div class="lb" style="left:650.8px;top:33px;letter-spacing:0.01px">com.yelang.project.unihttp</div>
<div class="lb" style="left:845.2px;top:33px;letter-spacing:-0.24px">BaiduWeather2DBCase</div>
<div class="lb" style="left:1020.1px;top:33px;letter-spacing:-0.08px">bdWeather2PG() : void</div>
<div class="lb" style="left:374.0px;top:344px;letter-spacing:-0.45px">Con...</div>
<div class="lb g" style="left:458.3px;top:344px;letter-spacing:-0.09px">Mar...</div>
<div class="lb g" style="left:524.9px;top:344px;letter-spacing:-0.41px">Pro...</div>
<div class="lb g" style="left:588.2px;top:344px;letter-spacing:-0.45px">Ser...</div>
<div class="lb g" style="left:650.5px;top:344px;letter-spacing:-0.45px">Data...</div>
<div class="lb g" style="left:715.0px;top:344px;letter-spacing:-0.45px">Sni...</div>
<div class="lb g" style="left:776.5px;top:344px;letter-spacing:-0.40px">Pro...</div>
<div class="lb g" style="left:840.0px;top:344px;letter-spacing:-0.45px">Pro...</div>
<div class="lb g" style="left:903.1px;top:344px;letter-spacing:-0.45px">Sea...</div>
<div class="lb g" style="left:965.1px;top:344px;letter-spacing:-0.45px">Pac...</div>
<div class="lb g" style="left:1088.4px;top:344px;letter-spacing:-0.45px">Deb...</div>
<div class="lb g" style="left:1152.5px;top:344px;letter-spacing:-0.38px">Call ...</div>
<div class="lb g" style="left:1028.5px;top:344px;letter-spacing:-0.15px;font-weight:bold">JU...</div>
<div class="lb" style="left:353.0px;top:388px;letter-spacing:0.17px">&lt;terminated&gt;</div>
<div class="lb" style="left:437.0px;top:388px;letter-spacing:-0.18px">BaiduWeather2DBCase.bdWeather2PG</div>
<div class="lb" style="left:666.5px;top:388px;letter-spacing:-0.35px">[JUnit]</div>
<div class="lb" style="left:706.2px;top:388px;letter-spacing:0.16px">D:\Program</div>
<div class="lb" style="left:778.2px;top:388px;letter-spacing:-0.16px">Files\Java\jre1.8.0_171\bin\javaw.exe</div>
<div class="lb" style="left:992.9px;top:388px;letter-spacing:-0.49px">(2025年8月10日</div>
<div class="lb" style="left:1086.0px;top:388px;letter-spacing:-0.32px">下午11:04:49)</div>

</div>
<div id="icons">
<!-- left panel tabs -->
<svg class="i" style="left:6px;top:8px" width="15" height="15" viewBox="0 0 15 15"><path d="M0.5 0.5h5.5l2.5 2.5v7.500h-8z" fill="#f4f4f2" stroke="#cfc5b4"/><path d="M2 3.500h4M2 5.500h3M2 7.500h2" stroke="#b9c3de" stroke-width="1"/><path d="M4.500 14V6.800l1-1.300h3l1 1.300h4.500l.5.500V14l-.5.500h-9z" fill="#fbe9b6" stroke="#dcb97a"/></svg>
<svg class="i" style="left:94px;top:9px" width="16" height="12" viewBox="0 0 16 12"><path d="M2.500 4v5h3M9 3h4.500M12 9.500h3" fill="none" stroke="#4a78c0" stroke-width="1.100"/><path d="M0.500 4V1l.6-.5h2.300l.8.900h1.800l.5.500V4z" fill="#fbe08a" stroke="#b78a2e" stroke-width=".9"/><path d="M5.500 10.500V7.500l.6-.5h2.300l.8.900H11l.5.500v2.100z" fill="#fbe08a" stroke="#b78a2e" stroke-width=".9"/></svg>
<svg class="i" style="left:178px;top:11px" width="11" height="11" viewBox="0 0 11 11"><path d="M0.700 2.500L2.500.7 5.500 3.400 8.500.7 10.300 2.500 7.500 5.300 10.300 8.200 8.500 10 5.500 7.200 2.500 10 .7 8.200 3.500 5.300z" fill="#fff" stroke="#505050" stroke-width="1" stroke-linejoin="round"/></svg>
<svg class="i" style="left:201px;top:8px" width="12" height="17" viewBox="0 0 12 17"><path d="M2.500 2v14M2.500 7.500h5M2.500 13.500h5" fill="none" stroke="#b4b6c4" stroke-width="1"/><circle cx="2.700" cy="2.300" r="2.100" fill="#bfe5ba" stroke="#84c080" stroke-width=".8"/><circle cx="8.300" cy="7.500" r="2.300" fill="#bfe5ba" stroke="#84c080" stroke-width=".8"/><circle cx="8.300" cy="13.500" r="2.300" fill="#bfe5ba" stroke="#84c080" stroke-width=".8"/></svg>
<svg class="i" style="left:297px;top:10px" width="10" height="4" viewBox="0 0 10 4"><rect x=".5" y=".5" width="9" height="3" fill="#fff" stroke="#5c5c5c"/></svg>
<svg class="i" style="left:320px;top:10px" width="10" height="11" viewBox="0 0 10 11"><rect x=".5" y=".5" width="9" height="9.500" fill="#fff" stroke="#5c5c5c"/><path d="M.5 2.500h9" stroke="#5c5c5c"/></svg>
<!-- left panel toolbar -->
<svg class="i" style="left:161px;top:34px" width="15" height="15" viewBox="0 0 15 15"><path d="M0.800 7.300L7 .8v4h7.200v5H7v4z" fill="#f6f6f6" stroke="#b4b4b4" stroke-linejoin="round"/></svg>
<svg class="i" style="left:184px;top:34px" width="15" height="15" viewBox="0 0 15 15"><path d="M14.200 7.300L8 .8v4H.8v5H8v4z" fill="#f6f6f6" stroke="#b4b4b4" stroke-linejoin="round"/></svg>
<svg class="i" style="left:207px;top:34px" width="13" height="15" viewBox="0 0 13 15"><path d="M0.500 9.500V2l1-1.500h3l1 1.500h5.500l1 1v6.500l-1 .5h-9.500z" fill="#dedede" stroke="#bcbcbc"/><path d="M2.800 7.700l3.700-3.700 3.700 3.700H8.200c-.2 2.300.6 3.800 2.800 4.800-3.800.7-6.200-1.300-6.200-4.800z" fill="#f2f2f2" stroke="#9a9a9a" stroke-width=".9" stroke-linejoin="round"/></svg>
<div class="i" style="left:228px;top:32px;width:1px;height:18px;background:#8c8c8c"></div>
<svg class="i" style="left:239px;top:35px" width="14" height="14" viewBox="0 0 14 14"><rect x=".5" y=".5" width="9.500" height="9.500" fill="#cfdcf3" stroke="#8da2cd"/><rect x="2.500" y="2.500" width="10.500" height="10.500" fill="#e6f1ff" stroke="#7389bb"/><path d="M4.500 7.800h6.500" stroke="#123f8c" stroke-width="1.200"/></svg>
<svg class="i" style="left:260px;top:33px" width="17" height="17" viewBox="0 0 17 17"><path d="M0.700 4.500L5.200.5v2.500h8v3h-8v2.500z" fill="#fdf3c8" stroke="#c98f1a" stroke-linejoin="round"/><path d="M16.300 12L11.800 8v2.500h-8v3h8V16z" fill="#fdf3c8" stroke="#c98f1a" stroke-linejoin="round"/></svg>
<div class="i" style="left:282px;top:32px;width:1px;height:18px;background:#8c8c8c"></div>
<svg class="i" style="left:293px;top:35px" width="14" height="14" viewBox="0 0 14 14"><circle cx="4" cy="3.800" r="3.300" fill="#d4d4d4"/><circle cx="9.800" cy="5.200" r="3.300" fill="#cacaca"/><circle cx="4.800" cy="9.800" r="3.500" fill="#b0b0b0"/><path d="M1.500 9.300h6.600" stroke="#9a9a9a"/></svg>
<svg class="i" style="left:322px;top:36px" width="12" height="7" viewBox="0 0 12 7"><path d="M1 .6h10L6 5.800z" fill="#fff" stroke="#4a4a4a" stroke-width=".9"/></svg>
<!-- editor tabs -->
<svg class="i jt" style="left:357px;top:9px" width="11" height="14" viewBox="0 0 11 14"><path d="M0.500 0.500h6.500l3.500 3.500v9.500h-10z" fill="#f3f6fc" stroke="#a98b4c"/><path d="M7 0.500v3.500h3.500z" fill="#fdf6e0" stroke="#a98b4c" stroke-width=".8"/><path d="M6.800 3v5.800c0 1.900-1.500 2.500-3.700 1.600" fill="none" stroke="#2f62a8" stroke-width="2"/></svg>
<svg class="i jt" style="left:508px;top:9px" width="11" height="14" viewBox="0 0 11 14"><path d="M0.500 0.500h6.500l3.500 3.500v9.500h-10z" fill="#f3f6fc" stroke="#a98b4c"/><path d="M7 0.500v3.500h3.500z" fill="#fdf6e0" stroke="#a98b4c" stroke-width=".8"/><path d="M6.800 3v5.800c0 1.900-1.500 2.500-3.700 1.600" fill="none" stroke="#2f62a8" stroke-width="2"/></svg>
<svg class="i jt" style="left:647px;top:9px" width="11" height="14" viewBox="0 0 11 14"><path d="M0.500 0.500h6.500l3.500 3.500v9.500h-10z" fill="#f3f6fc" stroke="#a98b4c"/><path d="M7 0.500v3.500h3.500z" fill="#fdf6e0" stroke="#a98b4c" stroke-width=".8"/><path d="M6.800 3v5.800c0 1.900-1.500 2.500-3.700 1.600" fill="none" stroke="#2f62a8" stroke-width="2"/></svg>
<svg class="i jt" style="left:792px;top:9px" width="11" height="14" viewBox="0 0 11 14"><path d="M0.500 0.500h6.500l3.500 3.500v9.500h-10z" fill="#f3f6fc" stroke="#a98b4c"/><path d="M7 0.500v3.500h3.500z" fill="#fdf6e0" stroke="#a98b4c" stroke-width=".8"/><path d="M6.800 3v5.800c0 1.900-1.500 2.500-3.700 1.600" fill="none" stroke="#2f62a8" stroke-width="2"/></svg>
<svg class="i jt" style="left:940px;top:9px" width="11" height="14" viewBox="0 0 11 14"><path d="M0.500 0.500h6.500l3.500 3.500v9.500h-10z" fill="#f3f6fc" stroke="#a98b4c"/><path d="M7 0.500v3.500h3.500z" fill="#fdf6e0" stroke="#a98b4c" stroke-width=".8"/><path d="M6.800 3v5.800c0 1.900-1.500 2.500-3.700 1.600" fill="none" stroke="#2f62a8" stroke-width="2"/></svg>
<svg class="i" style="left:1054px;top:10px" width="11" height="11" viewBox="0 0 11 11"><path d="M0.700 2.500L2.500.7 5.500 3.400 8.500.7 10.300 2.500 7.500 5.300 10.300 8.200 8.500 10 5.500 7.200 2.500 10 .7 8.200 3.500 5.300z" fill="#fff" stroke="#505050" stroke-width="1" stroke-linejoin="round"/></svg>
<div class="i" style="left:1080px;top:3px;font-family:'DejaVu Sans',sans-serif;font-size:15px;line-height:16px;font-weight:bold;color:#111;letter-spacing:-1px">»</div>
<div class="i" style="left:1088px;top:15px;font-size:9.500px;line-height:10px;color:#111;letter-spacing:-0.300px">30</div>
<svg class="i" style="left:1212px;top:10px" width="10" height="4" viewBox="0 0 10 4"><rect x=".5" y=".5" width="9" height="3" fill="#fff" stroke="#5c5c5c"/></svg>
<svg class="i" style="left:1235px;top:10px" width="10" height="11" viewBox="0 0 10 11"><rect x=".5" y=".5" width="9" height="9.500" fill="#fff" stroke="#5c5c5c"/><path d="M.5 2.500h9" stroke="#5c5c5c"/></svg>
<!-- breadcrumb -->
<svg class="i" style="left:358px;top:37px" width="6" height="9" viewBox="0 0 6 9"><path d="M0.300.3L5.500 4.500.3 8.700z" fill="#2e2e2e"/></svg>
<svg class="i" style="left:506px;top:37px" width="6" height="9" viewBox="0 0 6 9"><path d="M0.300.3L5.500 4.500.3 8.700z" fill="#2e2e2e"/></svg>
<svg class="i" style="left:618px;top:37px" width="6" height="9" viewBox="0 0 6 9"><path d="M0.300.3L5.500 4.500.3 8.700z" fill="#2e2e2e"/></svg>
<svg class="i" style="left:812px;top:37px" width="6" height="9" viewBox="0 0 6 9"><path d="M0.300.3L5.500 4.500.3 8.700z" fill="#2e2e2e"/></svg>
<svg class="i" style="left:987px;top:37px" width="6" height="9" viewBox="0 0 6 9"><path d="M0.300.3L5.500 4.500.3 8.700z" fill="#2e2e2e"/></svg>
<!-- maven project icon -->
<svg class="i" style="left:371px;top:32px" width="17" height="17" viewBox="0 0 17 17"><text x="0.600" y="4.800" font-family="Liberation Sans,sans-serif" font-size="6.500" font-weight="bold" fill="#1f5f9f">M</text><rect x="7" y="2.300" width="2.600" height="2.400" fill="#e8c468"/><path d="M14 .300v4.600c0 1.700-1.300 2-2.800 1.400" fill="none" stroke="#2a6aaf" stroke-width="1.400"/><path d="M2.200 8V6.300l8.500-.8 1.500 2.500z" fill="#fbe7ae"/><path d="M2.800 8.600h13.400l-4.200 5.300H6z" fill="#a9d4fb" stroke="#3a3ab4" stroke-width="1.200" stroke-linejoin="round"/><path d="M3.4 8.8L6.6 15.4H0.3z" fill="#f6c860" stroke="#e0a030" stroke-width=".9" stroke-linejoin="round"/><path d="M3.4 10.8v2.400M3.4 13.8v.700" stroke="#4a3208" stroke-width="1.100"/></svg>
<!-- src folder icon -->
<svg class="i" style="left:519px;top:34px" width="17" height="15" viewBox="0 0 17 15"><path d="M1.500 7V2.500l1-1.300h4.500v5.800" fill="#efe9da" stroke="#a47838" stroke-width="1"/><path d="M2.500 3h4M2.500 5h4" stroke="#c9c4b8" stroke-width="1"/><path d="M4.500 7.300h11.800l-3.800 4.500H4.500z" fill="#c9bb95" stroke="#a88848" stroke-width=".9" stroke-linejoin="round"/><rect x="7.300" y="1" width="7" height="5.700" fill="#6fcf4f" stroke="#2f5a1f" stroke-width="1"/><path d="M10.800 0v6.700M6.500 3.900h8.800" stroke="#2f5a1f" stroke-width="1.100"/><path d="M3.4 6.8L6.6 13.4H0.3z" fill="#f6c860" stroke="#e0a030" stroke-width=".9" stroke-linejoin="round"/><path d="M3.4 8.8v2.400M3.4 11.8v.700" stroke="#4a3208" stroke-width="1.100"/></svg>
<!-- package icon -->
<svg class="i" style="left:631px;top:34px" width="16" height="15" viewBox="0 0 16 15"><rect x="3.500" y="1.500" width="10.500" height="10" fill="#f1dda4" stroke="#b5754c" stroke-width="1.100"/><path d="M8.700 0v13.300M3 6.500h12.300" stroke="#7d4a30" stroke-width="1.200"/><path d="M3.4 6.8L6.6 13.4H0.3z" fill="#f6c860" stroke="#e0a030" stroke-width=".9" stroke-linejoin="round"/><path d="M3.4 8.8v2.400M3.4 11.8v.700" stroke="#4a3208" stroke-width="1.100"/></svg>
<!-- class icon -->
<svg class="i" style="left:826px;top:32px" width="13" height="13" viewBox="0 0 13 13"><circle cx="6.500" cy="6.500" r="6" fill="#3c9a45" stroke="#1f7a2c" stroke-width=".8"/><path d="M8.900 4.600A3 3 0 1 0 8.900 8.400" fill="none" stroke="#fff" stroke-width="1.700"/></svg>
<!-- method dot -->
<svg class="i" style="left:1004px;top:36px" width="9" height="9" viewBox="0 0 9 9"><circle cx="4.500" cy="4.500" r="3.900" fill="#4fa055" stroke="#2f7f3a" stroke-width=".9"/><circle cx="3.600" cy="3.500" r="1.400" fill="#8cc98d"/></svg>
<!-- console tabs -->
<svg class="i" style="left:356px;top:344px" width="14" height="13" viewBox="0 0 14 13"><rect x=".8" y=".8" width="12" height="8.600" rx="1.400" fill="#f4f8ff" stroke="#2f55a4" stroke-width="1.600"/><path d="M3.300 3.800h6.500M3.300 6h4" stroke="#2f55a4" stroke-width="1.100"/><path d="M5.500 10v1.500M8 10v1.500" stroke="#2f55a4"/><path d="M2 12h9.500" stroke="#2f55a4" stroke-width="1.500"/></svg>
<svg class="i" style="left:415px;top:346px" width="11" height="11" viewBox="0 0 11 11"><path d="M0.700 2.500L2.500.7 5.500 3.400 8.500.7 10.300 2.500 7.500 5.300 10.300 8.200 8.500 10 5.500 7.200 2.500 10 .7 8.200 3.500 5.300z" fill="#fff" stroke="#505050" stroke-width="1" stroke-linejoin="round"/></svg>
<svg class="i" style="left:438px;top:343px" width="14" height="15" viewBox="0 0 14 15"><path d="M0.500.5h10.500c2 2 .5 4-.5 6s0 5 2.500 7.500h-12.500z" fill="#f3f4f8" stroke="#c3c8d8"/><circle cx="5" cy="4" r="2.600" fill="#ef8f93"/><path d="M2.500 14v-3a2.500 2.500 0 0 1 5 0v3z" fill="#f9d48d"/></svg>
<svg class="i" style="left:506px;top:344px" width="14" height="13" viewBox="0 0 14 13"><rect x=".5" y=".5" width="13" height="12" fill="#f6f7fb" stroke="#a9afc6"/><path d="M.5 3.500h13M.5 6.500h13M.5 9.500h13M4.500 3.500v9" stroke="#c9cddd" stroke-width=".9"/><path d="M.5 2h13" stroke="#b7bcd2" stroke-width="2"/></svg>
<svg class="i" style="left:569px;top:344px" width="14" height="13" viewBox="0 0 14 13"><path d="M2.500 0v12.500M7 0v12.500M11.500 0v12.500" stroke="#7d93cc" stroke-width="1.100"/><circle cx="2.500" cy="8.500" r="2" fill="#cfe7b0" stroke="#9cc17a" stroke-width=".7"/><circle cx="7" cy="3.800" r="2.200" fill="#f7d48a" stroke="#d4a54a" stroke-width=".7"/><circle cx="11.500" cy="9" r="2" fill="#bcd0f0" stroke="#8aa3d4" stroke-width=".7"/></svg>
<svg class="i" style="left:630px;top:343px" width="16" height="15" viewBox="0 0 16 15"><path d="M0.500 1.500l4 1.500 4-2 4 2 2.500-1.500v11.500l-2.500 1.500-4-2-4 2-4-1.500z" fill="#b6dc8a" stroke="#8cba6a" stroke-width=".8"/><path d="M4.500 3v11M8.500 1v11" stroke="#e4f3c6" stroke-width="1.100"/><path d="M5 6.500c2 1 3-1 5 .5" stroke="#86b4e0" stroke-width="1" fill="none"/><rect x="10" y="5.500" width="5.500" height="9" fill="#f2efe6" stroke="#8f8a7c" stroke-width=".9"/><path d="M11.500 8h2.500M11.500 10.500h2.500M11.500 12.800h2.500" stroke="#8f8a7c" stroke-width=".9"/></svg>
<svg class="i" style="left:697px;top:344px" width="14" height="13" viewBox="0 0 14 13"><path d="M.5.500h10v3.500h3v8.500h-13z" fill="#fbfcff" stroke="#a3b1d2"/><path d="M2 2.200l3.300 3.300M2 2.200h2.300M2 2.200v2.300" stroke="#4b5a88" stroke-width=".9" fill="none"/><path d="M3.500 8.500h1.500M3.500 10.500h1.500" stroke="#e99" stroke-width="1.200"/><path d="M6 8.500h5.500" stroke="#9bc48a" stroke-width="1.200"/><path d="M6 10.500h5.500" stroke="#e9a0a0" stroke-width="1.200"/></svg>
<svg class="i" style="left:757px;top:343px" width="15" height="16" viewBox="0 0 15 16"><path d="M2 .5h10.500c2 2 .5 4-.5 6s0 5 2.500 7.500H2z" fill="#f3f4f8" stroke="#c3c8d8"/><circle cx="6.500" cy="4.300" r="2.600" fill="#ef8f93"/><path d="M3.500 8.500L.3 15h6.400z" fill="#fbe3b0" stroke="#e3b772" stroke-width=".7" stroke-linejoin="round"/><path d="M3.500 10.500v2.300M3.500 13.400v.6" stroke="#b48a4a" stroke-width=".9"/></svg>
<svg class="i" style="left:822px;top:347px" width="14" height="12" viewBox="0 0 14 12"><rect x=".5" y=".5" width="13" height="7" fill="#e9f1f9" stroke="#c5d3e4"/><rect x="1.500" y="2.500" width="7" height="3" fill="#7fc48a"/><circle cx="10.500" cy="8.300" r="3.300" fill="#6cc070" stroke="#4da458" stroke-width=".7"/><path d="M9.500 6.500l2.600 1.800-2.600 1.800z" fill="#fff"/></svg>
<svg class="i" style="left:883px;top:343px" width="17" height="16" viewBox="0 0 17 16"><path d="M10.500 2l3.500-1.500 2.500 2.500-1 3.500-9 8.500-5-5z" fill="#fbe8b8" stroke="#e7c98c" stroke-width=".9"/><path d="M4.500 6.500l5 5-2.500 2.300-5-5z" fill="#b8b8b8"/><path d="M12 3l2 2" stroke="#c9a860" stroke-width="1"/></svg>
<svg class="i" style="left:948px;top:344px" width="11" height="14" viewBox="0 0 11 14"><path d="M1 0v14M1 4h3M1 10.500h3" stroke="#9aa0b5" stroke-width="1"/><rect x="4.500" y="1" width="5.500" height="5.500" fill="#efc8a4" stroke="#c98e62" stroke-width=".8"/><rect x="4.500" y="8" width="5.500" height="5.500" fill="#efc8a4" stroke="#c98e62" stroke-width=".8"/><path d="M7.200 1v5.500M4.500 3.700H10M7.200 8v5.500M4.500 10.700H10" stroke="#c98e62" stroke-width=".8"/></svg>
<svg class="i" style="left:1007px;top:345px" width="17" height="14" viewBox="0 0 17 14"><path d="M5.500 0v8" stroke="#6ab187" stroke-width="1.400"/><rect x="1" y="7.500" width="5.500" height="6" fill="#dff3e4" stroke="#62b883" stroke-width="1.200"/><path d="M2.300 10l1.300 1.800L5.600 8.500" fill="none" stroke="#3fa468" stroke-width="1.100"/><text x="8" y="11" font-family="Liberation Serif,serif" font-size="11" fill="#de6474">U</text><path d="M5 .5h3" stroke="#6ab187" stroke-width="1.200"/></svg>
<svg class="i" style="left:1069px;top:343px" width="15" height="15" viewBox="0 0 15 15"><path d="M7.500 4.500L5 1M7.500 4.500L10 1M3.500 6.500L.5 4.500M11.500 6.500l3-2M3 9H0M12 9h3M3.800 11.500L1.500 14M11.200 11.500l2.300 2.500" stroke="#8fb59c" stroke-width="1"/><ellipse cx="7.500" cy="9" rx="3.600" ry="4.600" fill="#d2ead6" stroke="#7fae8e" stroke-width="1"/><circle cx="7.500" cy="4.500" r="1.700" fill="#9ec7a8"/></svg>
<svg class="i" style="left:1133px;top:342px" width="16" height="17" viewBox="0 0 16 17"><path d="M0 2.500h5M0 8.500h10M0 14.500h5M3 1l2 1.500-2 1.500M3 13l2 1.500-2 1.500M8 7l2 1.500-2 1.500" fill="none" stroke="#9a9fb0" stroke-width=".9"/><circle cx="7.500" cy="2.700" r="2.200" fill="#bfe2bf" stroke="#93c796" stroke-width=".7"/><circle cx="12.800" cy="8.500" r="2.200" fill="#bfe2bf" stroke="#93c796" stroke-width=".7"/><circle cx="7.500" cy="14.300" r="2.200" fill="#bfe2bf" stroke="#93c796" stroke-width=".7"/></svg>
<svg class="i" style="left:1212px;top:345px" width="10" height="4" viewBox="0 0 10 4"><rect x=".5" y=".5" width="9" height="3" fill="#fff" stroke="#5c5c5c"/></svg>
<svg class="i" style="left:1235px;top:345px" width="10" height="11" viewBox="0 0 10 11"><rect x=".5" y=".5" width="9" height="9.500" fill="#fff" stroke="#5c5c5c"/><path d="M.5 2.500h9" stroke="#5c5c5c"/></svg>
<!-- console toolbar -->
<svg class="i" style="left:955px;top:371px" width="12" height="12" viewBox="0 0 12 12"><rect x=".7" y=".7" width="10.600" height="10.600" rx="1" fill="#e6e6e6" stroke="#b4b4b4"/><rect x="2.200" y="2.200" width="7.600" height="7.600" fill="#bdbdbd"/></svg>
<svg class="i" style="left:977px;top:370px" width="14" height="13" viewBox="0 0 14 13"><path d="M1 3L3.200.8 7 4.300 10.800.8 13 3 9.300 6.500 13 10 10.800 12.200 7 8.700 3.200 12.200 1 10 4.700 6.500z" fill="#5c5c5c" stroke="#4c4c4c" stroke-width=".4" stroke-linejoin="round"/></svg>
<svg class="i" style="left:999px;top:368px" width="16" height="15" viewBox="0 0 16 15"><path d="M1 3L3 1 6.500 4.200 10 1 12 3 8.700 6.200 12 9.500 10 11.500 6.500 8.300 3 11.500 1 9.500 4.300 6.200z" fill="#f4f4f4" stroke="#6a6a6a" stroke-width=".9" stroke-linejoin="round"/><path d="M4.500 6.500L6.500 4.500 10 7.700 13.500 4.500 15.500 6.500 12.200 9.700 15.500 13 13.500 15 10 11.800 6.500 15 4.500 13 7.800 9.700z" fill="#606060" stroke="#505050" stroke-width=".4" stroke-linejoin="round"/></svg>
<div class="i" style="left:1020px;top:367px;width:1px;height:18px;background:#8c8c8c"></div>
<svg class="i" style="left:1030px;top:368px" width="16" height="16" viewBox="0 0 16 16"><path d="M.5.500h7l3 3v10.500h-10z" fill="#fff" stroke="#c4ad72"/><path d="M2.300 3.500h4.500M2.300 5.500h6.200M2.300 7.500h6.200M2.300 9.500h5M2.300 11.500h4" stroke="#4a6fb8" stroke-width="1"/><path d="M8.700 9l6 6M14.700 9l-6 6" stroke="#8a8a8a" stroke-width="2.200"/></svg>
<div class="i" style="left:1049px;top:366px;width:23px;height:20px;border:1.500px solid #5f5f5f;border-radius:4px;background:#ececec"></div>
<svg class="i" style="left:1053px;top:368px" width="17" height="17" viewBox="0 0 17 17"><rect x="2.500" y="1.500" width="13.500" height="13.500" fill="#dcedfc" stroke="#4a78c0"/><path d="M12 1.500v13.500" stroke="#4a78c0"/><rect x="12.500" y="2" width="3" height="12.500" fill="#f4f8fd"/><rect x="13.200" y="3.500" width="1.600" height="1.600" fill="#2f5fb0"/><rect x="13.200" y="11.500" width="1.600" height="1.600" fill="#2f5fb0"/><rect x="12.800" y="6.500" width="2.400" height="3.500" fill="#e4e9f2" stroke="#9ab" stroke-width=".5"/><path d="M3.300 10V8.800a2 2 0 0 1 4 0V10" fill="none" stroke="#c08a1c" stroke-width="1.400"/><rect x="1.500" y="10" width="7.600" height="5.800" rx="1" fill="#e6ae2c" stroke="#b9820f" stroke-width=".9"/><path d="M2.300 11.300h6" stroke="#f6d777" stroke-width="1"/><path d="M5.300 12.500v1.500" stroke="#6a4a08" stroke-width="1.100"/></svg>
<svg class="i" style="left:1076px;top:368px" width="16" height="15" viewBox="0 0 16 15"><path d="M.5.500h6.500l2.500 2.500v11h-9z" fill="#fff" stroke="#c4ad72"/><path d="M2.300 3.500h4M2.300 5.500h5.200M2.300 7.500h5.200M2.300 9.500h3M2.300 11.500h3.500" stroke="#4a6fb8" stroke-width="1"/><path d="M12 2.500h2.800v8.300H9.500v2.200L5.700 9.800l3.800-3.200v2.200H12z" fill="#fbe9b0" stroke="#d8a838" stroke-width=".9" stroke-linejoin="round"/></svg>
<div class="i" style="left:1095px;top:366px;width:23px;height:20px;border:1.500px solid #5f5f5f;border-radius:4px;background:#ececec"></div>
<svg class="i" style="left:1099px;top:368px" width="17" height="16" viewBox="0 0 17 16"><rect x="4.800" y="1" width="11.400" height="8.500" fill="#fff" stroke="#3a78d0" stroke-width="1.100"/><path d="M7 4h5.500M7 6.200h7" stroke="#3f5fa8" stroke-width="1.100"/><rect x="1.300" y="8.300" width="5.800" height="4.700" fill="#fff" stroke="#3a78d0" stroke-width="1.100"/><path d="M4.200 13v1.500" stroke="#2f5fb0" stroke-width="1.800"/><path d="M1.800 15.200h5" stroke="#2f5fb0" stroke-width="1.300"/></svg>
<svg class="i" style="left:1121px;top:368px" width="17" height="16" viewBox="0 0 17 16"><rect x="4.800" y="1" width="11.400" height="8.500" fill="#fff" stroke="#3a78d0" stroke-width="1.100"/><path d="M6.700 2.800l4.200 4.400M10.900 2.800L6.700 7.200" stroke="#e23a3a" stroke-width="1.800"/><path d="M12.300 4h2.500M12.300 6.200h2.500" stroke="#3f5fa8" stroke-width="1.100"/><rect x="1.300" y="8.300" width="5.800" height="4.700" fill="#fff" stroke="#3a78d0" stroke-width="1.100"/><path d="M4.200 13v1.500" stroke="#2f5fb0" stroke-width="1.800"/><path d="M1.800 15.200h5" stroke="#2f5fb0" stroke-width="1.300"/></svg>
<div class="i" style="left:1143px;top:367px;width:1px;height:18px;background:#8c8c8c"></div>
<svg class="i" style="left:1153px;top:368px" width="16" height="15" viewBox="0 0 16 15"><rect x=".7" y="4.700" width="12.600" height="9.600" fill="#fdfeff" stroke="#5a8ad0" stroke-width="1"/><path d="M.7 6h12.600" stroke="#6a9ae0" stroke-width="2.200"/><path d="M8 10l3-3" stroke="#444" stroke-width="1"/><path d="M10 3.800l3.200-3.200 2.500 2.500-3.200 3.200z" fill="#4fb066" stroke="#2a8a44" stroke-width=".9"/><path d="M9.500 3.300l4 4" stroke="#2a8a44" stroke-width="1.400"/></svg>
<svg class="i" style="left:1177px;top:369px" width="15" height="14" viewBox="0 0 15 14"><rect x=".8" y=".8" width="13.400" height="9.400" rx="1.200" fill="#f3f3f3" stroke="#9a9a9a" stroke-width="1.500"/><path d="M3.500 4h7M3.500 6.500h5" stroke="#8a8a8a" stroke-width="1.100"/><path d="M6 10.500v2M9 10.500v2" stroke="#9a9a9a"/><path d="M3 13.200h9" stroke="#9a9a9a" stroke-width="1.500"/></svg>
<svg class="i" style="left:1199px;top:374px" width="8" height="5" viewBox="0 0 8 5"><path d="M0 .3h8L4 4.700z" fill="#777"/></svg>
<svg class="i" style="left:1216px;top:368px" width="17" height="16" viewBox="0 0 17 16"><rect x=".7" y="3.700" width="13.600" height="11.100" fill="#fdfeff" stroke="#4a7ac8" stroke-width="1.100"/><path d="M.7 5h13.600" stroke="#5a8ad8" stroke-width="2.400"/><path d="M12.500.3l1.300 2.400 2.600.4-1.900 1.900.4 2.700-2.400-1.300-2.400 1.300.4-2.700-1.900-1.900 2.600-.4z" fill="#fdf0b4" stroke="#d4a63a" stroke-width=".8" stroke-linejoin="round"/><path d="M14.300 7.500c0 4-2 6.300-5 7" fill="none" stroke="#f3e3a8" stroke-width="1.200"/></svg>
<svg class="i" style="left:1240px;top:374px" width="9" height="5" viewBox="0 0 9 5"><path d="M0 .3h9L4.500 4.900z" fill="#111"/></svg>
<!-- outline panel -->
<div class="i" style="left:1280px;top:3px;font-family:'DejaVu Sans',sans-serif;font-size:15px;line-height:16px;font-weight:bold;color:#111;letter-spacing:-1px">»</div>
<div class="i" style="left:1288px;top:15px;font-size:9.500px;line-height:10px;color:#111">2</div>
<svg class="i" style="left:1317px;top:10px" width="10" height="4" viewBox="0 0 10 4"><rect x=".5" y=".5" width="9" height="3" fill="#fff" stroke="#5c5c5c"/></svg>
<svg class="i" style="left:1340px;top:10px" width="10" height="11" viewBox="0 0 10 11"><rect x=".5" y=".5" width="9" height="9.500" fill="#fff" stroke="#5c5c5c"/><path d="M.5 2.500h9" stroke="#5c5c5c"/></svg>
<svg class="i" style="left:1277px;top:35px" width="14" height="14" viewBox="0 0 14 14"><circle cx="4" cy="3.800" r="3.300" fill="#d4d4d4"/><circle cx="9.800" cy="5.200" r="3.300" fill="#cacaca"/><circle cx="4.800" cy="9.800" r="3.500" fill="#b0b0b0"/><path d="M1.500 9.300h6.600" stroke="#9a9a9a"/></svg>
<svg class="i" style="left:1300px;top:35px" width="14" height="14" viewBox="0 0 14 14"><rect x=".5" y=".5" width="9.500" height="9.500" fill="#cfdcf3" stroke="#8da2cd"/><rect x="2.500" y="2.500" width="10.500" height="10.500" fill="#e6f1ff" stroke="#7389bb"/><path d="M4.500 7.800h6.500" stroke="#123f8c" stroke-width="1.200"/></svg>
<svg class="i" style="left:1321px;top:32px" width="17" height="18" viewBox="0 0 17 18"><path d="M2.500 3v12M.5 12.500l2 3 2-3" fill="none" stroke="#3b5f9a" stroke-width="1.100"/><text x="5" y="8.500" font-family="Liberation Sans,sans-serif" font-size="13.500" font-weight="bold" fill="#1f7f6a">a</text><text x="9.500" y="17" font-family="Liberation Sans,sans-serif" font-size="13.500" font-weight="bold" fill="#8a2a8a">z</text></svg>
<svg class="i" style="left:1276px;top:55px" width="16" height="16" viewBox="0 0 16 16"><circle cx="8" cy="8.500" r="5.500" fill="#3f9be0" stroke="#2a7cc8" stroke-width=".8"/><path d="M5.500 6h5M7 6v5.500M7 8.500h2.500" stroke="#e9f4ff" stroke-width="1.300" fill="none"/><path d="M.5 1l15 14" stroke="#1a2a9a" stroke-width="1.500"/></svg>
<svg class="i" style="left:1299px;top:55px" width="15" height="16" viewBox="0 0 15 16"><circle cx="6" cy="9.500" r="3.800" fill="#9a9a9a"/><path d="M.5 3.500l12 12" stroke="#1a2a9a" stroke-width="1.500"/><text x="9.500" y="6.500" font-family="Liberation Sans,sans-serif" font-size="8" font-weight="bold" fill="#2a5db0">S</text></svg>
<svg class="i" style="left:1325px;top:59px" width="8.500" height="8.500" viewBox="0 0 10 10"><circle cx="5" cy="5" r="4.100" fill="#5aa85a" stroke="#3d8f45" stroke-width=".9"/><circle cx="4" cy="3.800" r="1.500" fill="#8fcc8f"/></svg>
<svg class="i" style="left:1276px;top:78px" width="15" height="16" viewBox="0 0 15 16"><circle cx="6" cy="9.500" r="3.800" fill="#9a9a9a"/><path d="M.5 3.500l12 12" stroke="#1a2a9a" stroke-width="1.500"/><text x="10" y="6.500" font-family="Liberation Sans,sans-serif" font-size="8" font-weight="bold" fill="#2a5db0">L</text></svg>
<svg class="i" style="left:1280px;top:105px" width="12" height="7" viewBox="0 0 12 7"><path d="M1 .6h10L6 5.800z" fill="#fff" stroke="#4a4a4a" stroke-width=".9"/></svg>
<svg class="i" style="left:1294px;top:125px" width="14" height="13" viewBox="0 0 14 13"><rect x="1.500" y="1.500" width="11" height="10" fill="#e6e6b8" stroke="#c4c48e" stroke-width=".8"/><path d="M7 0v13M0 6.500h14" stroke="#77773c" stroke-width="1.300"/><path d="M1 1.500h12M1 11.500h12M1.500 1v11M12.500 1v11" stroke="#9a9a5a" stroke-width=".8"/></svg>
<svg class="i" style="left:1279px;top:148px" width="7" height="7" viewBox="0 0 7 7"><path d="M6.200 0.600v5.600h-5.600z" fill="#404040" stroke="#202020" stroke-width=".8" stroke-linejoin="round"/></svg>
<svg class="i" style="left:1293px;top:143px" width="14" height="14" viewBox="0 0 14 14"><circle cx="7" cy="7" r="6.400" fill="#3c9a45" stroke="#1f7a2c" stroke-width=".9"/><path d="M9.600 5A3.200 3.200 0 1 0 9.600 9" fill="none" stroke="#fff" stroke-width="1.900"/></svg>
<svg class="i" style="left:1314px;top:162px" width="16" height="13" viewBox="0 0 16 13"><rect x="1" y="8" width="3.600" height="3.600" fill="#fff" stroke="#d02a3a" stroke-width="1.300"/><text x="4" y="7.500" font-family="Liberation Sans,sans-serif" font-size="8.500" fill="#d02a3a">S</text><text x="10.500" y="7.500" font-family="Liberation Sans,sans-serif" font-size="8.500" fill="#2a62c0">F</text></svg>
<svg class="i" style="left:1314px;top:189px" width="6" height="6" viewBox="0 0 6 6"><rect x="1" y="1" width="3.800" height="3.800" fill="#fff" stroke="#d02a3a" stroke-width="1.300"/></svg>
<svg class="i" style="left:1314px;top:209px" width="6" height="6" viewBox="0 0 6 6"><rect x="1" y="1" width="3.800" height="3.800" fill="#fff" stroke="#d02a3a" stroke-width="1.300"/></svg>
<svg class="i" style="left:1312px;top:227px" width="9" height="9" viewBox="0 0 9 9"><circle cx="4.500" cy="4.500" r="3.900" fill="#4fa055" stroke="#2f7f3a" stroke-width=".9"/><circle cx="3.600" cy="3.500" r="1.400" fill="#8cc98d"/></svg>

</div>
</body></html>
